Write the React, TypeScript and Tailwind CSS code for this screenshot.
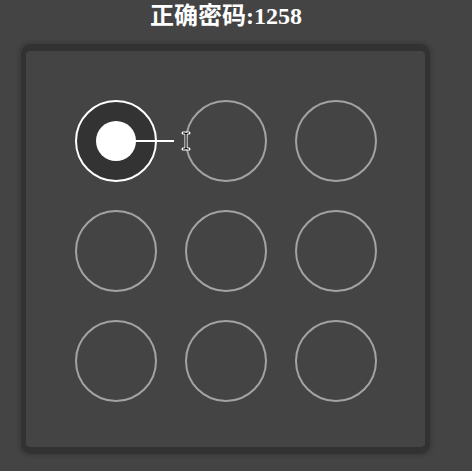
import React from 'react'

const points = [
  [90, 90], [200, 90], [310, 90],
  [90, 200], [200, 200], [310, 200],
  [90, 310], [200, 310], [310, 310],
]

const App: React.FC = () => {
  return (
    <div className="min-h-screen bg-[#444444]">
      <div className="w-[452px] flex flex-col items-center pt-[2px]">
        <h1 className="text-[24px] leading-[28px] font-bold text-white [font-family:'Liberation_Serif','Noto_Sans_CJK_SC',serif]">
          正确密码:1258
        </h1>
        <div className="relative mt-[14px] ml-[-2px] rounded-[10px] border-x-[5px] border-y-[7px] border-[#323232] bg-[#444444] shadow-[0_0_3px_3px_rgba(0,0,0,0.1)]">
          <svg width="399" height="396" viewBox="0 0 399 396" className="block">
            {points.map(([x, y], i) =>
              i === 0 ? null : (
                <circle key={i} cx={x} cy={y} r="40" fill="none" stroke="#a3a3a3" strokeWidth="2" />
              )
            )}
            {/* selected point */}
            <circle cx="90" cy="90" r="40" fill="#333333" stroke="#ffffff" strokeWidth="2" />
            <circle cx="90" cy="90" r="20" fill="#ffffff" />
            <line x1="90" y1="90" x2="148" y2="90" stroke="#ffffff" strokeWidth="2" />
          </svg>
          {/* text cursor */}
          <svg width="12" height="22" viewBox="0 0 12 22" className="absolute left-[154px] top-[79px]">
            <path d="M3 3 H5 L6 4 L7 3 H9 M6 4 V18 M3 19 H5 L6 18 L7 19 H9" fill="none" stroke="#ffffff" strokeWidth="3" strokeLinecap="round" />
            <path d="M3 3 H5 L6 4 L7 3 H9 M6 4 V18 M3 19 H5 L6 18 L7 19 H9" fill="none" stroke="#000000" strokeWidth="1.2" />
          </svg>
        </div>
      </div>
    </div>
  )
}

export default App
